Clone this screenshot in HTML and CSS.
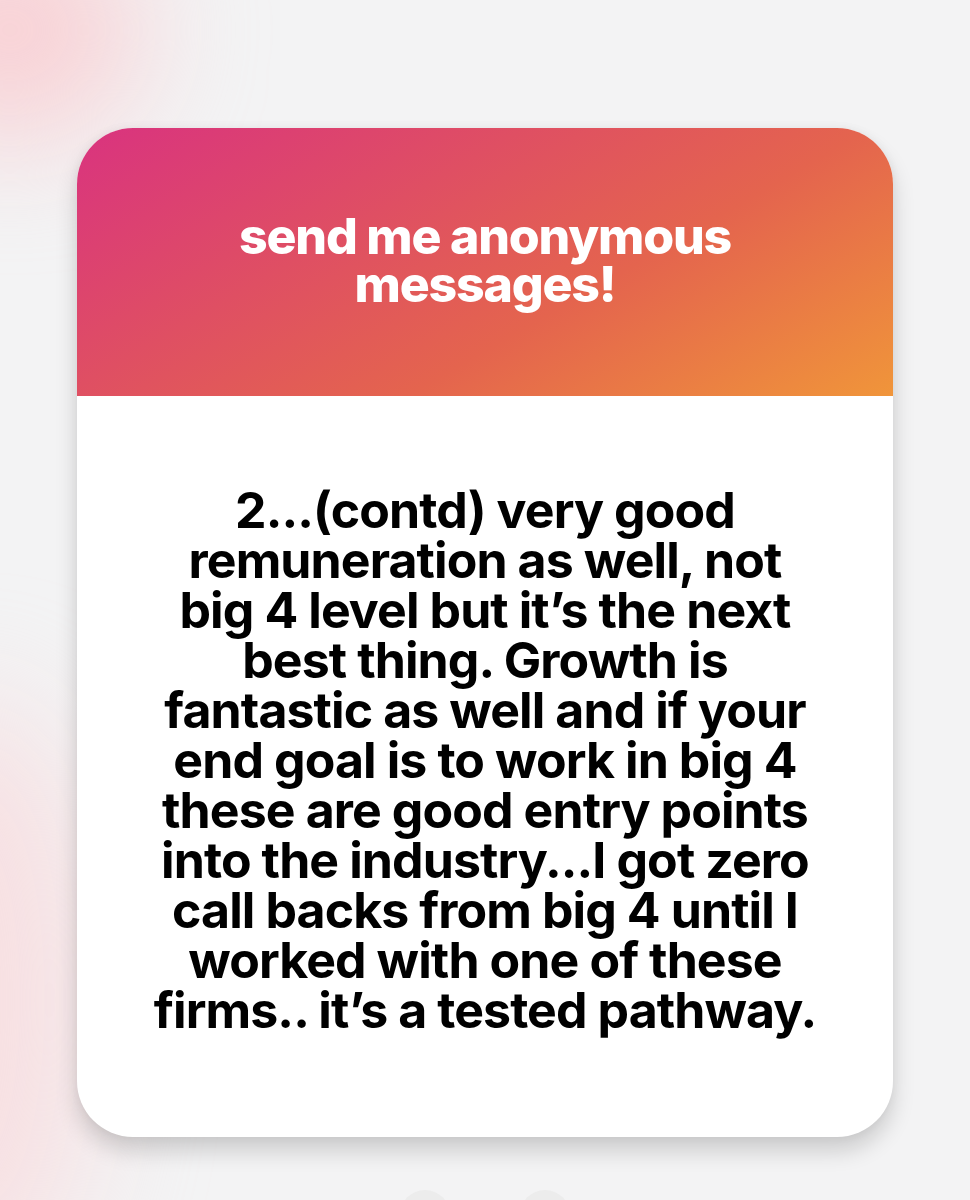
FILE: index.html
```html
<!DOCTYPE html>
<html>
<head>
<meta charset="utf-8">
<link rel="stylesheet" href="styles.css">
</head>
<body>
<div class="page">
  <div class="blob blob-a"></div>
  <div class="blob blob-b"></div>
  <div class="card">
    <div class="card-head">
      <h1 class="title">send me anonymous<br>messages!</h1>
    </div>
    <div class="card-body">
      <p class="answer">2...(contd) very good<br>remuneration as well, not<br>big 4 level but it’s the next<br>best thing. Growth is<br>fantastic as well and if your<br>end goal is to work in big 4<br>these are good entry points<br>into the industry...I got zero<br>call backs from big 4 until I<br>worked with one of these<br>firms.. it’s a tested pathway.</p>
    </div>
  </div>
  <div class="dots">
    <span class="dot"></span>
    <span class="dot"></span>
  </div>
</div>
</body>
</html>
```
FILE: styles.css
```css
html, body {
  margin: 0;
  padding: 0;
}
body {
  background: #f3f3f4;
  font-family: Inter, "Liberation Sans", sans-serif;
}
.page {
  position: relative;
  width: 970px;
  height: 1200px;
  overflow: hidden;
  padding-top: 128px;
  box-sizing: border-box;
}
.blob {
  position: absolute;
  border-radius: 50%;
  filter: blur(60px);
}
.blob-a {
  left: -120px;
  top: -80px;
  width: 260px;
  height: 220px;
  background: rgba(250, 200, 205, 0.8);
}
.blob-b {
  left: -140px;
  top: 700px;
  width: 230px;
  height: 600px;
  background: rgba(250, 215, 218, 0.7);
}
.card {
  position: relative;
  margin-left: 77px;
  width: 816px;
  height: 1009px;
  border-radius: 56px;
  overflow: hidden;
  background: #fff;
  box-shadow: 0 14px 22px rgba(0, 0, 0, 0.16), 0 0 10px rgba(0, 0, 0, 0.05);
  display: flex;
  flex-direction: column;
}
.card-head {
  height: 268px;
  flex: none;
  background: linear-gradient(150deg, #d9337f 0%, #df4f63 35%, #e4644e 62%, #f0953a 100%);
  display: flex;
  align-items: center;
  justify-content: center;
}
.title {
  margin: 0;
  padding-bottom: 4px;
  color: #fff;
  font-family: Inter, "Liberation Sans", sans-serif;
  font-weight: 800;
  font-size: 50px;
  line-height: 48px;
  letter-spacing: -1.2px;
  text-align: center;
}
.card-body {
  flex: 1;
  display: flex;
  align-items: center;
  justify-content: center;
}
.answer {
  margin: 0;
  margin-bottom: 14px;
  color: #000;
  font-family: Inter, "Liberation Sans", sans-serif;
  font-weight: 700;
  font-size: 50px;
  line-height: 50px;
  letter-spacing: -0.9px;
  text-align: center;
}
.dots {
  position: absolute;
  left: 0;
  right: 0;
  top: 1190px;
  display: flex;
  justify-content: center;
  gap: 70px;
}
.dot {
  width: 50px;
  height: 50px;
  border-radius: 50%;
  background: #ececec;
}
```
